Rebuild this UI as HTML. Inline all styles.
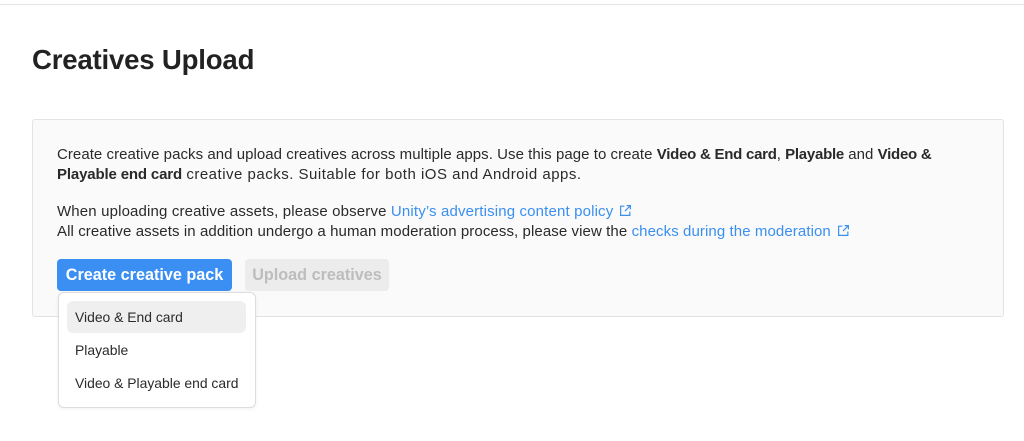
<!DOCTYPE html>
<html><head><style>
body{margin:0;width:1024px;height:441px;background:#fff;font-family:"Liberation Sans",sans-serif;color:#222;position:relative;overflow:hidden}
.top{position:absolute;left:0;top:4px;width:1024px;height:1px;background:#e4e4e4}
h1{position:absolute;left:32px;top:44px;margin:0;font-size:27.6px;font-weight:bold;color:#222;letter-spacing:-0.2px}
.panel{position:absolute;left:32px;top:119px;width:970px;height:196px;background:#fafafa;border:1px solid #e3e3e3;border-radius:3px}
.t{position:absolute;left:57px;font-size:15px;letter-spacing:0.15px;line-height:20px;white-space:nowrap;color:#2a2a2a}
.t b{letter-spacing:-0.15px}
a{color:#3a8ff0;text-decoration:none}
.btn{position:absolute;top:259px;height:32px;line-height:32px;border-radius:4px;font-size:16.2px;font-weight:bold;text-align:center}
.dd{position:absolute;left:58px;top:292px;width:196px;height:114px;background:#fff;border:1px solid #ddd;border-radius:6px;box-shadow:0 1px 4px rgba(0,0,0,.06)}
.it{position:absolute;left:16px;font-size:13.9px;color:#2a2a2a}
svg{vertical-align:-1px;margin-left:6px}
</style></head><body>
<div class="top"></div>
<h1>Creatives Upload</h1>
<div class="panel"></div>
<div class="t" style="top:145px;letter-spacing:0.05px">Create creative packs and upload creatives across multiple apps. Use this page to create <b style="letter-spacing:-0.25px">Video &amp; End card</b>, <b style="letter-spacing:-0.25px">Playable</b> and <b style="letter-spacing:-0.25px">Video &amp;</b></div>
<div class="t" style="top:165px"><b>Playable end card</b> <span style="letter-spacing:0.5px">creative packs. Suitable for both iOS and Android apps.</span></div>
<div class="t" style="top:202px">When uploading creative assets, please observe <a>Unity’s advertising content policy<svg width="13" height="13" viewBox="0 0 12 12" fill="none" stroke="#3a8ff0" stroke-width="1.1"><path d="M5 2H1.5v8.5H10V7M7 1.5h3.5V5M10.5 1.5 5.5 6.5"/></svg></a></div>
<div class="t" style="top:222px;letter-spacing:0.09px">All creative assets in addition undergo a human moderation process, please view the <a>checks during the moderation<svg width="13" height="13" viewBox="0 0 12 12" fill="none" stroke="#3a8ff0" stroke-width="1.1"><path d="M5 2H1.5v8.5H10V7M7 1.5h3.5V5M10.5 1.5 5.5 6.5"/></svg></a></div>
<div class="btn" style="left:57px;width:175px;background:#3b8ff2;color:#fff">Create creative pack</div>
<div class="btn" style="left:245px;width:144px;background:#ececec;color:#bdbdbd">Upload creatives</div>
<div class="dd">
<div style="position:absolute;left:8px;top:8px;width:179px;height:32px;background:#efefef;border-radius:6px"></div>
<div class="it" style="top:16px">Video &amp; End card</div>
<div class="it" style="top:49px">Playable</div>
<div class="it" style="top:82px">Video &amp; Playable end card</div>
</div>
</body></html>
